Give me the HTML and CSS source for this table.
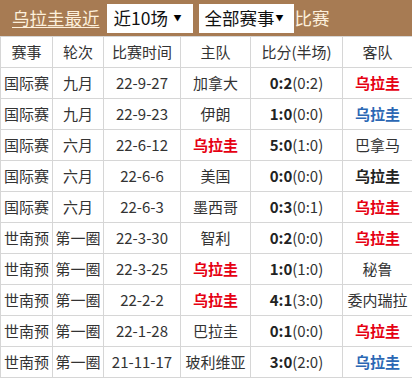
FILE: index.html
```html
<!DOCTYPE html>
<html>
<head>
<meta charset="utf-8">
<link rel="stylesheet" href="styles.css">
</head>
<body>
<div class="panel">
  <div class="bar">
    <a class="title" href="#">乌拉圭最近</a>
    <span class="pick pick-n"><span>近10场</span><span class="arrow">▼</span></span>
    <span class="pick pick-e"><span>全部赛事</span><span class="arrow">▼</span></span>
    <span class="tail">比赛</span>
  </div>
  <table class="games">
    <colgroup>
      <col class="c1"><col class="c2"><col class="c3"><col class="c4"><col class="c5"><col class="c6">
    </colgroup>
    <thead>
      <tr><th>赛事</th><th>轮次</th><th>比赛时间</th><th>主队</th><th>比分(半场)</th><th>客队</th></tr>
    </thead>
    <tbody>
      <tr><td>国际赛</td><td>九月</td><td>22-9-27</td><td>加拿大</td><td><b>0:2</b>(0:2)</td><td class="win">乌拉圭</td></tr>
      <tr><td>国际赛</td><td>九月</td><td>22-9-23</td><td>伊朗</td><td><b>1:0</b>(0:0)</td><td class="lose">乌拉圭</td></tr>
      <tr><td>国际赛</td><td>六月</td><td>22-6-12</td><td class="win">乌拉圭</td><td><b>5:0</b>(1:0)</td><td>巴拿马</td></tr>
      <tr><td>国际赛</td><td>六月</td><td>22-6-6</td><td>美国</td><td><b>0:0</b>(0:0)</td><td class="draw">乌拉圭</td></tr>
      <tr><td>国际赛</td><td>六月</td><td>22-6-3</td><td>墨西哥</td><td><b>0:3</b>(0:1)</td><td class="win">乌拉圭</td></tr>
      <tr><td>世南预</td><td>第一圈</td><td>22-3-30</td><td>智利</td><td><b>0:2</b>(0:0)</td><td class="win">乌拉圭</td></tr>
      <tr><td>世南预</td><td>第一圈</td><td>22-3-25</td><td class="win">乌拉圭</td><td><b>1:0</b>(1:0)</td><td>秘鲁</td></tr>
      <tr><td>世南预</td><td>第一圈</td><td>22-2-2</td><td class="win">乌拉圭</td><td><b>4:1</b>(3:0)</td><td>委内瑞拉</td></tr>
      <tr><td>世南预</td><td>第一圈</td><td>22-1-28</td><td>巴拉圭</td><td><b>0:1</b>(0:0)</td><td class="win">乌拉圭</td></tr>
      <tr><td>世南预</td><td>第一圈</td><td>21-11-17</td><td>玻利维亚</td><td><b>3:0</b>(2:0)</td><td class="lose">乌拉圭</td></tr>
    </tbody>
  </table>
</div>
</body>
</html>
```

FILE: styles.css
```css
html, body {
  margin: 0;
  padding: 0;
  background: #ffffff;
}

body {
  font-family: "Noto Sans CJK SC", "Noto Sans", sans-serif;
  color: #333333;
}

.panel {
  width: 412px;
}

.bar {
  height: 36px;
  background: #a77b53;
  display: flex;
  align-items: center;
  padding-left: 12px;
  font-size: 17.5px;
  color: #fdf0dc;
}

.title {
  color: #fdf0dc;
  text-decoration: underline;
  text-underline-offset: 2px;
  text-decoration-thickness: 1px;
  margin-right: 7px;
  line-height: 1;
}

.pick {
  display: flex;
  align-items: center;
  justify-content: space-between;
  height: 29px;
  background: #ffffff;
  color: #111111;
  box-sizing: border-box;
  padding: 0 11px 0 7px;
  line-height: 1;
}

.pick-n {
  width: 86px;
  margin-right: 6px;
}

.pick-e {
  width: 95px;
  padding-left: 6px;
  padding-right: 10px;
}

.arrow {
  font-size: 8px;
  color: #000000;
}

.tail {
  margin-left: 1px;
  line-height: 1;
}

.games {
  width: 412px;
  border-collapse: collapse;
  table-layout: fixed;
  font-size: 15px;
}

.c1 { width: 52px; }
.c2 { width: 51px; }
.c3 { width: 77px; }
.c4 { width: 70px; }
.c5 { width: 92px; }
.c6 { width: 70px; }

.games th,
.games td {
  border: 1px solid #d6d6d6;
  height: 31px;
  box-sizing: border-box;
  padding: 0;
  text-align: center;
  vertical-align: middle;
  white-space: nowrap;
  font-weight: normal;
  line-height: 20px;
}

.games td b {
  font-weight: bold;
  color: #222222;
}

.games .win {
  color: #e60012;
  font-weight: bold;
}

.games .lose {
  color: #2b67b4;
  font-weight: bold;
}

.games .draw {
  color: #222222;
  font-weight: bold;
}
```
